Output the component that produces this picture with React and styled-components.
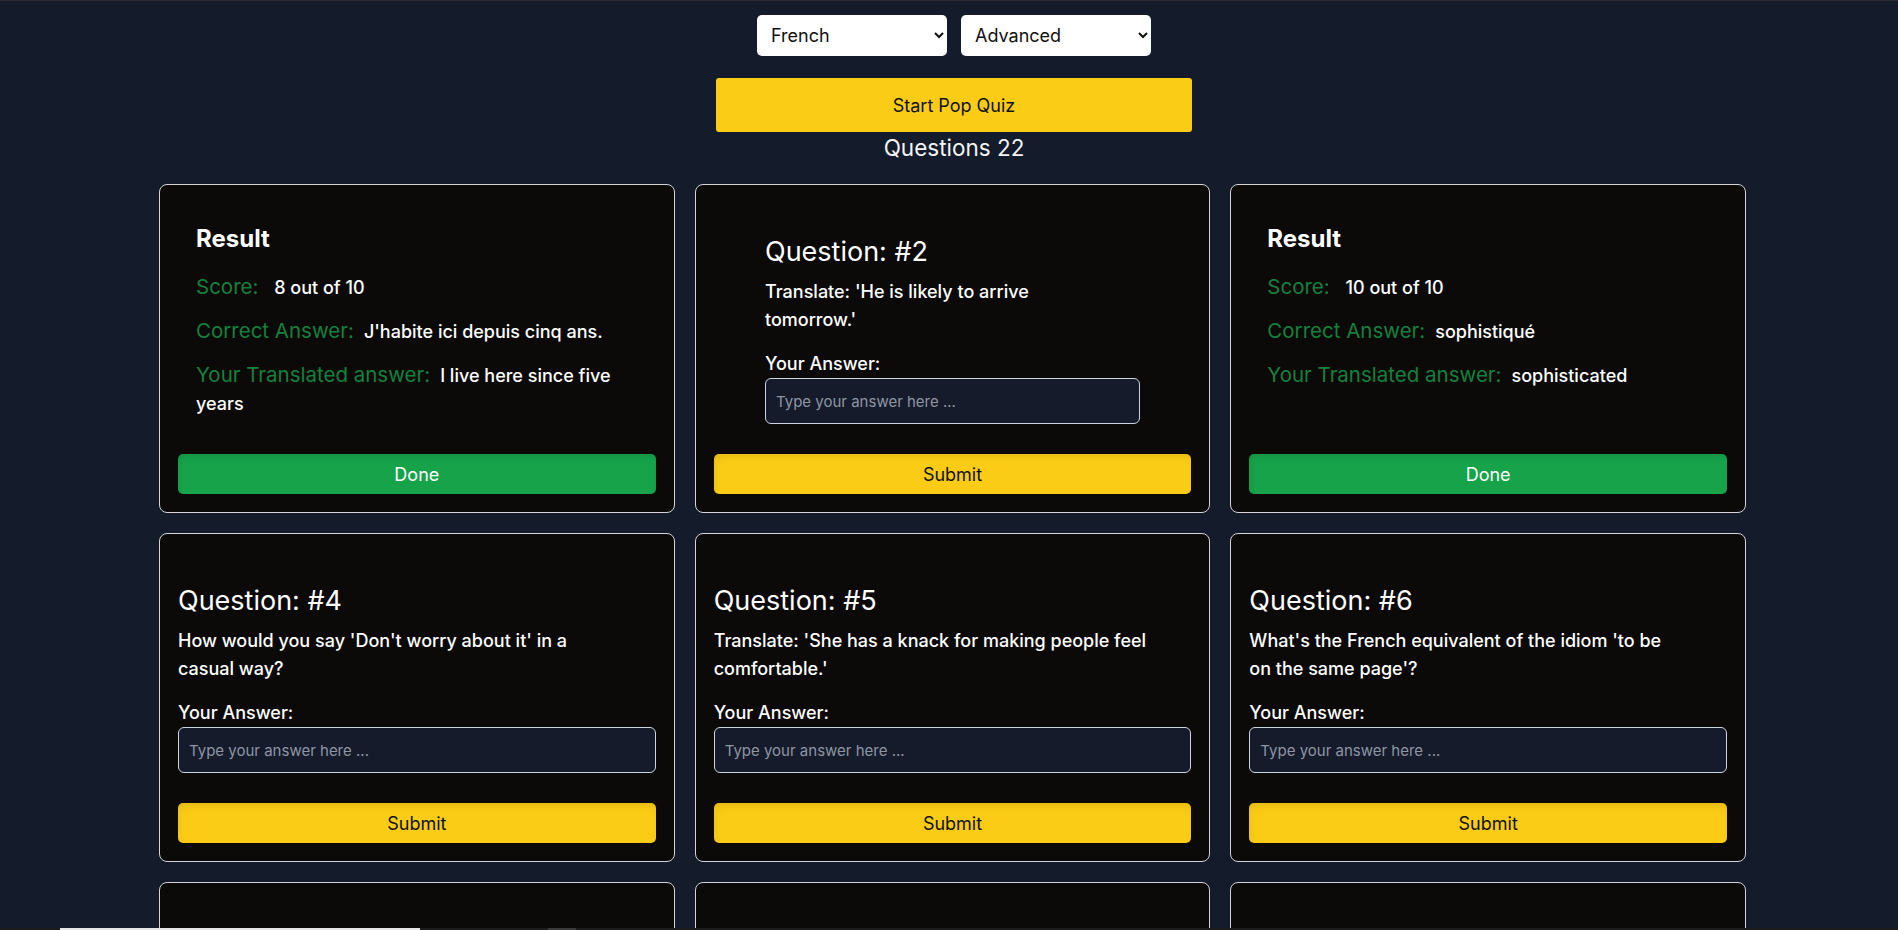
import React from 'react'
import styled, { createGlobalStyle } from 'styled-components';

const GlobalStyle = createGlobalStyle`
  html, body {
    margin: 0;
    padding: 0;
    background: #141b2b;
  }
  body {
    font-family: Inter, "Noto Sans", "Liberation Sans", sans-serif;
    color: #fff;
    border-top: 1px solid #2c2c2c;
  }
  * { box-sizing: border-box; }
`;

const Page = styled.div`
  padding: 14px 152px 40px 159px;
  display: flex;
  flex-direction: column;
  align-items: center;
`;

const Controls = styled.div`
  display: flex;
  gap: 14px;
  padding-left: 3px;
`;

const Select = styled.select`
  width: 190px;
  height: 41px;
  border: none;
  border-radius: 5px;
  background: #fff;
  color: #111;
  font-family: Inter, "Noto Sans", sans-serif;
  font-size: 18px;
  padding: 0 6px 0 10px;
  outline: none;
`;

const StartButton = styled.button`
  margin-top: 22px;
  margin-left: 3px;
  width: 476px;
  height: 54px;
  border: none;
  border-radius: 3px;
  background: #facc15;
  color: #111;
  font-family: Inter, "Noto Sans", sans-serif;
  font-size: 18px;
  cursor: pointer;
`;

const Count = styled.h2`
  margin: 0 0 0 3px;
  font-size: 22.5px;
  line-height: 32px;
  font-weight: 400;
  color: #f3f4f6;
`;

const Grid = styled.div`
  margin-top: 20px;
  width: 100%;
  display: grid;
  grid-template-columns: repeat(3, 1fr);
  gap: 20px;
`;

const Card = styled.div`
  height: 329px;
  background: #0c0a09;
  border: 1px solid #d4d4d8;
  border-radius: 8px;
  padding: 18px;
  display: flex;
  flex-direction: column;
`;

const ResultBody = styled.div`
  flex: 1;
  padding: 20px 18px 0;
`;

const ResultTitle = styled.h3`
  margin: 0 0 18px;
  font-size: 24px;
  line-height: 32px;
  font-weight: 700;
`;

const ResultRow = styled.p`
  margin: 0 0 15px;
  font-size: 18px;
  line-height: 28px;
  font-weight: 500;
  color: #fff;
`;

const Label = styled.span`
  font-size: 20.5px;
  line-height: 28px;
  font-weight: 400;
  color: #15803d;
  margin-right: 10px;
  white-space: pre;
`;

const QuestionBody = styled.div`
  flex: 1;
  padding-top: 33px;
  width: ${p => p.$narrow ? '375px' : '100%'};
  align-self: center;
`;

const QuestionTitle = styled.h3`
  margin: 0;
  font-size: 27px;
  line-height: 32px;
  font-weight: 400;
`;

const QuestionText = styled.p`
  margin: 10px 0 0;
  max-width: 91.5%;
  font-size: 18px;
  line-height: 28px;
  font-weight: 500;
`;

const AnswerLabel = styled.label`
  display: block;
  margin-top: 16px;
  font-size: 18px;
  line-height: 28px;
  font-weight: 500;
`;

const AnswerInput = styled.input`
  display: block;
  width: 100%;
  height: 46px;
  padding: 0 10px;
  background: #151b2b;
  border: 1px solid #cbd5e1;
  border-radius: 6px;
  color: #fff;
  font-family: Inter, "Noto Sans", sans-serif;
  font-size: 15px;
  outline: none;
  &::placeholder { color: #8e95a3; }
`;

const ActionButton = styled.button`
  width: 100%;
  height: 40px;
  flex-shrink: 0;
  border: none;
  border-radius: 5px;
  font-family: Inter, "Noto Sans", sans-serif;
  font-size: 18px;
  cursor: pointer;
  background: ${p => p.$done ? '#16a34a' : '#facc15'};
  color: ${p => p.$done ? '#fff' : '#111'};
  box-shadow: inset 2px 5px 8px -3px rgba(0, 0, 0, 0.1);
`;

const BottomStrip = styled.div`
  position: fixed;
  left: 0;
  right: 0;
  bottom: 0;
  height: 2px;
  background: #1c1c1c;
  display: flex;
`;

const StripPiece = styled.span`
  margin-left: ${p => p.$at}px;
  width: ${p => p.$w}px;
  background: ${p => p.$c};
`;

const cards = [
  { type: 'result', score: '8 out of 10', correct: "J'habite ici depuis cinq ans.", answer: 'I live here since five years' },
  { type: 'question', n: 2, text: "Translate: 'He is likely to arrive tomorrow.'", narrow: true },
  { type: 'result', score: '10 out of 10', correct: 'sophistiqué', answer: 'sophisticated' },
  { type: 'question', n: 4, text: "How would you say 'Don't worry about it' in a casual way?" },
  { type: 'question', n: 5, text: "Translate: 'She has a knack for making people feel comfortable.'" },
  { type: 'question', n: 6, text: "What's the French equivalent of the idiom 'to be on the same page'?" },
  { type: 'question', n: 7, text: "Translate: 'I would have come if I had known.'" },
  { type: 'question', n: 8, text: "How do you politely decline an invitation?" },
  { type: 'question', n: 9, text: "Translate: 'It's raining cats and dogs.'" },
];

function ResultCard({ c }) {
  return (
    <Card>
      <ResultBody>
        <ResultTitle>Result</ResultTitle>
        <ResultRow><Label>Score: </Label>{c.score}</ResultRow>
        <ResultRow><Label>Correct Answer:</Label>{c.correct}</ResultRow>
        <ResultRow><Label>Your Translated answer:</Label>{c.answer}</ResultRow>
      </ResultBody>
      <ActionButton $done>Done</ActionButton>
    </Card>
  )
}

function QuestionCard({ c }) {
  return (
    <Card>
      <QuestionBody $narrow={c.narrow}>
        <QuestionTitle>Question: #{c.n}</QuestionTitle>
        <QuestionText>{c.text}</QuestionText>
        <AnswerLabel>Your Answer:</AnswerLabel>
        <AnswerInput placeholder="Type your answer here ..." />
      </QuestionBody>
      <ActionButton>Submit</ActionButton>
    </Card>
  )
}

export default function App() {
  return (
    <>
      <GlobalStyle />
      <Page>
        <Controls>
          <Select defaultValue="French">
            <option>French</option>
            <option>Spanish</option>
            <option>German</option>
          </Select>
          <Select defaultValue="Advanced">
            <option>Beginner</option>
            <option>Intermediate</option>
            <option>Advanced</option>
          </Select>
        </Controls>
        <StartButton>Start Pop Quiz</StartButton>
        <Count>Questions 22</Count>
        <Grid>
          {cards.map((c, i) => c.type === 'result'
            ? <ResultCard key={i} c={c} />
            : <QuestionCard key={i} c={c} />)}
        </Grid>
      </Page>
      <BottomStrip>
        <StripPiece $at={60} $w={360} $c="#e5e5e5" />
        <StripPiece $at={128} $w={28} $c="#3a3a3a" />
      </BottomStrip>
    </>
  )
}
